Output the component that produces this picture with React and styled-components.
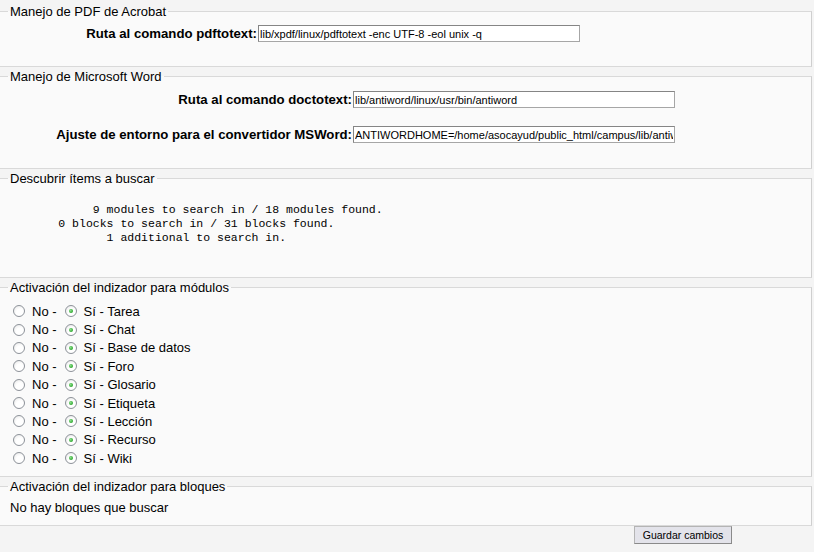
import React from "react";
import styled, { createGlobalStyle } from "styled-components";

const Global = createGlobalStyle`
  html, body { margin: 0; padding: 0; background: #f4f4f4; }
  body { font-family: "Liberation Sans", Arial, sans-serif; font-size: 13px; color: #000; }
`;

const Page = styled.div`
  width: 814px;
  height: 552px;
  padding-top: 4px;
  box-sizing: border-box;
  overflow: hidden;
`;

const Stack = styled.div`
  display: flex;
  flex-direction: column;
  gap: 2px;
  width: 812px;
`;

const Fieldset = styled.fieldset`
  margin: 0;
  min-width: 0;
  padding: ${(p) => p.$pt}px 0 ${(p) => p.$pb}px 8px;
  border: 1px solid #d9d9d9;
  border-left: 0;
  border-right-color: #cfcfcf;
  background: #fafafa;
  box-sizing: border-box;
`;

const Legend = styled.legend`
  padding: 0 2px;
  font-size: 13px;
  line-height: 15px;
  color: #000;
`;

const FormGrid = styled.div`
  display: grid;
  grid-template-columns: ${(p) => p.$labelW}px 322px;
  column-gap: 1px;
  row-gap: 18px;
  align-items: center;
`;

const Label = styled.label`
  text-align: right;
  font-weight: bold;
  font-size: 13.2px;
  line-height: 15px;
  white-space: nowrap;
`;

const TextInput = styled.input`
  width: 322px;
  height: 17px;
  box-sizing: border-box;
  margin: 0;
  padding: 0 1px;
  border: 1px solid #a6a6a6;
  border-top-color: #858585;
  border-left-color: #858585;
  background: #fff;
  font-family: "Liberation Sans", Arial, sans-serif;
  font-size: 11px;
  color: #000;
  outline: none;
`;

const Pre = styled.pre`
  margin: 0 0 0 2px;
  font-family: "Liberation Mono", "Courier New", monospace;
  font-size: 11.5px;
  line-height: 14px;
  color: #000;
`;

const RadioList = styled.div`
  display: flex;
  flex-direction: column;
`;

const RadioRow = styled.div`
  display: flex;
  align-items: center;
  height: 18.375px;
  font-size: 13px;
`;

const Radio = styled.span`
  display: inline-block;
  position: relative;
  width: 12px;
  height: 12px;
  margin: 0 7px 0 5px;
  border-radius: 50%;
  border: 1px solid #8d9299;
  box-sizing: border-box;
  background: radial-gradient(circle at 60% 65%, #ffffff 40%, #e4e4e4 100%);
  flex: none;
  &::after {
    content: "";
    display: ${(p) => (p.$checked ? "block" : "none")};
    position: absolute;
    left: 3px;
    top: 3px;
    width: 4px;
    height: 4px;
    border-radius: 50%;
    background: radial-gradient(circle at 40% 40%, #8fe08f 0%, #2aa52a 70%);
  }
`;

const Opt = styled.span`
  line-height: 15px;
  margin-right: ${(p) => (p.$gap ? 3 : 0)}px;
`;

const Note = styled.div`
  font-size: 13px;
  line-height: 15px;
  margin-left: 2px;
`;

const Footer = styled.div`
  display: flex;
  padding-left: 634px;
`;

const Button = styled.button`
  width: 98px;
  height: 18px;
  margin: 0;
  padding: 0;
  border: 1px solid #8a8a8a;
  border-top-color: #b4b4b4;
  border-left-color: #b4b4b4;
  background: #e3e3ea;
  font-family: "Liberation Sans", Arial, sans-serif;
  font-size: 10.5px;
  color: #000;
  line-height: 16px;
`;

const modules = [
  "Tarea",
  "Chat",
  "Base de datos",
  "Foro",
  "Glosario",
  "Etiqueta",
  "Lección",
  "Recurso",
  "Wiki",
];

const preText =
  "            9 modules to search in / 18 modules found.\n" +
  "       0 blocks to search in / 31 blocks found.\n" +
  "              1 additional to search in.";

export default function App() {
  return (
    <Page>
      <Global />
      <Stack>
        <Fieldset $pt={6} $pb={24}>
          <Legend>Manejo de PDF de Acrobat</Legend>
          <FormGrid $labelW={249}>
            <Label>Ruta al comando pdftotext:</Label>
            <TextInput readOnly value="lib/xpdf/linux/pdftotext -enc UTF-8 -eol unix -q" />
          </FormGrid>
        </Fieldset>

        <Fieldset $pt={7} $pb={25}>
          <Legend>Manejo de Microsoft Word</Legend>
          <FormGrid $labelW={344}>
            <Label>Ruta al comando doctotext:</Label>
            <TextInput readOnly value="lib/antiword/linux/usr/bin/antiword" />
            <Label>Ajuste de entorno para el convertidor MSWord:</Label>
            <TextInput readOnly value="ANTIWORDHOME=/home/asocayud/public_html/campus/lib/antiword/linux/usr/share/antiword" />
          </FormGrid>
        </Fieldset>

        <Fieldset $pt={17} $pb={32}>
          <Legend>Descubrir ítems a buscar</Legend>
          <Pre>{preText}</Pre>
        </Fieldset>

        <Fieldset $pt={7} $pb={9}>
          <Legend>Activación del indizador para módulos</Legend>
          <RadioList>
            {modules.map((m) => (
              <RadioRow key={m}>
                <Radio />
                <Opt $gap>No -</Opt>
                <Radio $checked />
                <Opt>Sí - {m}</Opt>
              </RadioRow>
            ))}
          </RadioList>
        </Fieldset>

        <Fieldset $pt={6} $pb={10}>
          <Legend>Activación del indizador para bloques</Legend>
          <Note>No hay bloques que buscar</Note>
        </Fieldset>
      </Stack>
      <Footer>
        <Button>Guardar cambios</Button>
      </Footer>
    </Page>
  );
}
